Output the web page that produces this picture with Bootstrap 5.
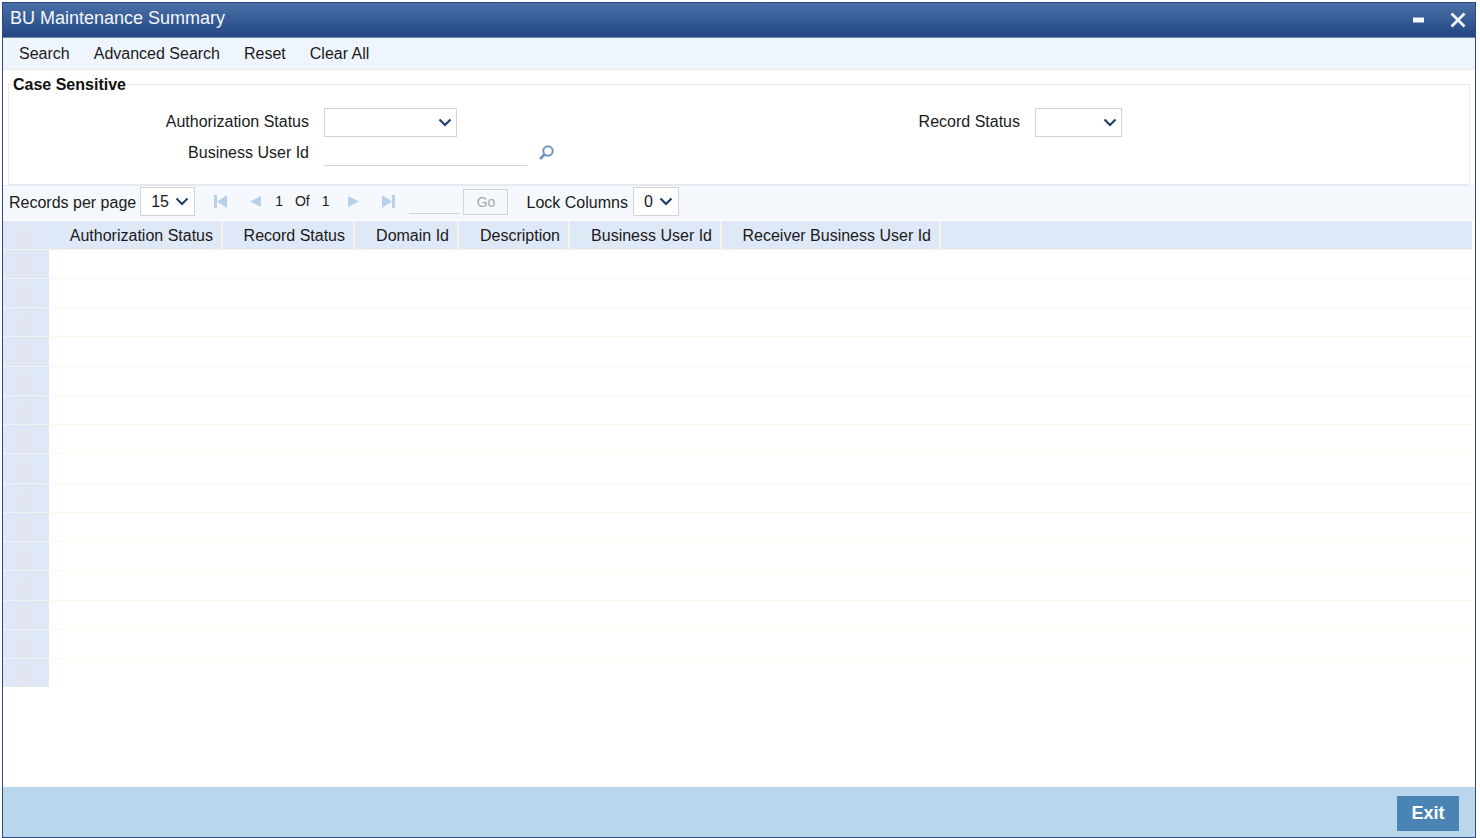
<!DOCTYPE html>
<html lang="en">
<head>
<meta charset="utf-8">
<title>BU Maintenance Summary</title>
<link href="https://cdn.jsdelivr.net/npm/bootstrap@5.3.0/dist/css/bootstrap.min.css" rel="stylesheet">
<style>
html,body{height:100%;}
body{margin:0;background:#fff;font-family:"Liberation Sans",Arial,sans-serif;font-size:16px;color:#1a1a1a;padding:2px 4px 0 2px;overflow:hidden;}
.win{height:836px;border:1px solid #2c4a80;background:#fff;display:flex;flex-direction:column;}
.titlebar{height:35px;flex:none;background:linear-gradient(#4a70a8,#234682);color:#f2f7fc;font-size:18px;padding:0 8px 4px 7px;border-bottom:1px solid #6f8cb4;}
.wbtn{width:18px;height:18px;display:block;}
.wgap{gap:20px;margin-top:4px;}
.tools{height:32px;flex:none;background:#eff5fd;border-bottom:1px solid #e6ebf2;padding-left:4px;padding-bottom:1px;}
.tools a{color:#1a1a1a;text-decoration:none;padding:0 12px;line-height:29px;}
.fset{margin:14px 5px 0 5px;height:101px;border:1px solid #e6e9ee;position:relative;flex:none;min-width:0;padding:0;}
.fset legend{position:absolute;left:4px;top:-10px;float:none;width:auto;margin:0;padding:0;font-size:16px;font-weight:700;line-height:20px;background:#fff;color:#111;}
.frow{height:31px;}
.frow1{padding-top:22px;height:53px;}
.lab{text-align:right;margin-bottom:2px;}
.l1{width:300px;}
.lr{width:563px;}
.sel{background:#fff;border:1px solid #d3d3d3;height:29px;padding:0 10px;color:#1a1a1a;display:flex;align-items:center;justify-content:space-between;}
.sel svg{width:14px;height:9px;flex:none;}
.s1{width:133px;margin-left:15px;padding-right:4px;}
.s2{width:87px;margin-left:15px;padding-right:4px;}
.txt{width:203px;height:29px;margin:0 0 4px 15px;border-bottom:1px solid #d3d3d3;}
.lens{margin:0 0 2px 11px;width:17px;height:17px;}
.pager{height:35px;flex:none;background:#f5f8fd;border-top:1px solid #e6ebf2;padding:0 0 3px 6px;color:#1a1a1a;}
.ptext{margin-top:2px;}
.s3{width:55px;margin-left:4px;padding:0 5px 0 10px;}
.s4{width:46px;margin-left:5px;padding:0 5px 0 10px;}
.pg{font-size:14px;margin-left:12px;}
.ic{display:block;flex:none;}
.m18{margin-left:18px;}
.m20{margin-left:20px;}
.m17{margin-left:17px;}
.m13{margin-left:13px;}
.gotxt{width:51px;height:25px;border-bottom:1px solid #d3d3d3;margin-left:13px;}
.gobtn{width:45px;height:26px;border:1px solid #d3d3d3;background:#f5f8fd;color:#a8a8a8;font-size:14px;margin-left:3px;padding:0 0 0 2px;line-height:24px;text-align:center;}
.lockl{margin-left:19px;margin-top:2px;}
.grid{flex:none;margin:1px 2px 0 0;width:1469px;border-collapse:collapse;table-layout:fixed;background:#fff;}
.grid th{height:28px;background:#dfe8f6;font-weight:400;text-align:right;padding:2px 8px 0 0;border-right:2px solid #f7f3ea;border-top:0;border-bottom:1px solid #f5f0e6;color:#1a1a1a;white-space:nowrap;}
.grid th:last-child{border-right:0;}
.grid td{height:29.25px;padding:0;border-bottom:1px solid #fdf6e8;}
.grid tr:last-child td{border-bottom:0;height:28.25px;}
.grid th.chk,.grid td.chk{background:#dfe8f6;border-bottom:1px solid #f2f2f2;border-right:0;padding:0;vertical-align:bottom;}
.chkbox{display:block;width:18px;height:21px;margin:0 auto 1px;background:#e1e6f0;}
.c0{width:46px}.c1{width:173px}.c2{width:132px}.c3{width:104px}.c4{width:111px}.c5{width:152px}.c6{width:219px}
.spacer{flex:1 1 auto;}
.foot{height:50px;flex:none;background:#bad6ec;padding:9px 16px 0 0;}
.exit{width:62px;height:35px;background:#4a84b4;color:#fff;font-weight:700;font-size:18px;border:0;border-radius:0;padding:0;}
</style>
</head>
<body>
<div class="win">
  <div class="titlebar d-flex align-items-center justify-content-between">
    <span>BU Maintenance Summary</span>
    <span class="d-flex align-items-center wgap">
      <svg class="wbtn" viewBox="0 0 18 18"><rect x="2" y="6.500" width="11" height="5" fill="#f2f7fc"/></svg>
      <svg class="wbtn" viewBox="0 0 18 18"><path d="M2.500 2.500 15.500 15.500M15.500 2.500 2.500 15.500" stroke="#f2f7fc" stroke-width="2.800" fill="none"/></svg>
    </span>
  </div>
  <div class="tools d-flex align-items-center">
    <a href="#">Search</a><a href="#">Advanced Search</a><a href="#">Reset</a><a href="#">Clear All</a>
  </div>
  <fieldset class="fset">
    <legend>Case Sensitive</legend>
    <div class="frow frow1 d-flex align-items-center">
      <span class="lab l1">Authorization Status</span>
      <div class="sel s1"><span></span><svg viewBox="0 0 14 9"><path d="M1.500 1.500 7 7l5.500-5.500" stroke="#1c3f66" stroke-width="2.200" fill="none"/></svg></div>
      <span class="lab lr">Record Status</span>
      <div class="sel s2"><span></span><svg viewBox="0 0 14 9"><path d="M1.500 1.500 7 7l5.500-5.500" stroke="#1c3f66" stroke-width="2.200" fill="none"/></svg></div>
    </div>
    <div class="frow d-flex align-items-center">
      <span class="lab l1">Business User Id</span>
      <div class="txt"></div>
      <svg class="lens" viewBox="0 0 17 17"><circle cx="10" cy="7" r="4.700" stroke="#6b93c6" stroke-width="2" fill="none"/><path d="M6.500 10.500 2 15" stroke="#6b93c6" stroke-width="2.600" fill="none"/></svg>
    </div>
  </fieldset>
  <div class="pager d-flex align-items-center">
    <span class="ptext">Records per page</span>
    <div class="sel s3"><span>15</span><svg viewBox="0 0 14 9"><path d="M1.500 1.500 7 7l5.500-5.500" stroke="#1c3f66" stroke-width="2" fill="none"/></svg></div>
    <svg class="ic m18" width="15" height="15" viewBox="0 0 15 15"><rect x="1" y="1" width="3" height="13" fill="#b9d0ea"/><path d="M14 1v13L4 7.500z" fill="#b9d0ea"/></svg>
    <svg class="ic m20" width="14" height="15" viewBox="0 0 14 15"><path d="M13 2v11L2 7.500z" fill="#b9d0ea"/></svg>
    <span class="pg m13">1</span>
    <span class="pg">Of</span>
    <span class="pg">1</span>
    <svg class="ic m17" width="14" height="15" viewBox="0 0 14 15"><path d="M1 2v11l11-5.500z" fill="#b9d0ea"/></svg>
    <svg class="ic m20" width="15" height="15" viewBox="0 0 15 15"><path d="M1 1v13l10-6.500z" fill="#b9d0ea"/><rect x="11" y="1" width="3" height="13" fill="#b9d0ea"/></svg>
    <div class="gotxt"></div>
    <button class="gobtn" type="button" disabled>Go</button>
    <span class="lockl">Lock Columns</span>
    <div class="sel s4"><span>0</span><svg viewBox="0 0 14 9"><path d="M1.500 1.500 7 7l5.500-5.500" stroke="#1c3f66" stroke-width="2.200" fill="none"/></svg></div>
  </div>
  <table class="grid">
    <colgroup><col class="c0"><col class="c1"><col class="c2"><col class="c3"><col class="c4"><col class="c5"><col class="c6"><col></colgroup>
    <thead><tr><th class="chk"><span class="chkbox"></span></th><th>Authorization Status</th><th>Record Status</th><th>Domain Id</th><th>Description</th><th>Business User Id</th><th>Receiver Business User Id</th><th></th></tr></thead>
    <tbody>
      <tr><td class="chk"><span class="chkbox"></span></td><td colspan="7"></td></tr>
      <tr><td class="chk"><span class="chkbox"></span></td><td colspan="7"></td></tr>
      <tr><td class="chk"><span class="chkbox"></span></td><td colspan="7"></td></tr>
      <tr><td class="chk"><span class="chkbox"></span></td><td colspan="7"></td></tr>
      <tr><td class="chk"><span class="chkbox"></span></td><td colspan="7"></td></tr>
      <tr><td class="chk"><span class="chkbox"></span></td><td colspan="7"></td></tr>
      <tr><td class="chk"><span class="chkbox"></span></td><td colspan="7"></td></tr>
      <tr><td class="chk"><span class="chkbox"></span></td><td colspan="7"></td></tr>
      <tr><td class="chk"><span class="chkbox"></span></td><td colspan="7"></td></tr>
      <tr><td class="chk"><span class="chkbox"></span></td><td colspan="7"></td></tr>
      <tr><td class="chk"><span class="chkbox"></span></td><td colspan="7"></td></tr>
      <tr><td class="chk"><span class="chkbox"></span></td><td colspan="7"></td></tr>
      <tr><td class="chk"><span class="chkbox"></span></td><td colspan="7"></td></tr>
      <tr><td class="chk"><span class="chkbox"></span></td><td colspan="7"></td></tr>
      <tr><td class="chk"><span class="chkbox"></span></td><td colspan="7"></td></tr>
    </tbody>
  </table>
  <div class="spacer"></div>
  <div class="foot d-flex justify-content-end align-items-start">
    <button class="btn exit" type="button">Exit</button>
  </div>
</div>
<script src="https://cdn.jsdelivr.net/npm/bootstrap@5.3.0/dist/js/bootstrap.bundle.min.js"></script>
</body>
</html>
